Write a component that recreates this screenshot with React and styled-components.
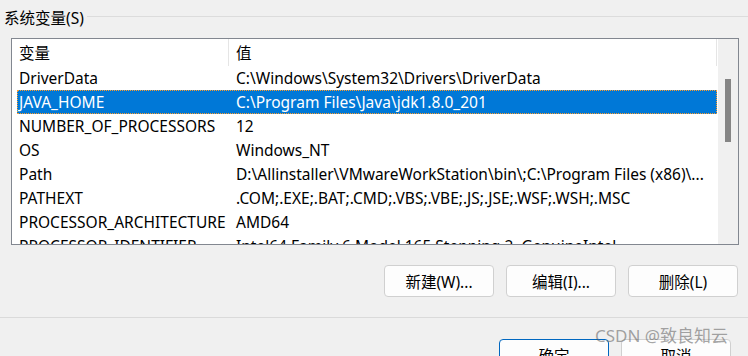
import React from 'react';
import styled, { createGlobalStyle } from 'styled-components';

const Global = createGlobalStyle`
    body {
        margin: 0;
        background: #f0f0f0;
        font-family: "Noto Sans", "Noto Sans CJK SC", sans-serif;
    }
`;

const Window = styled.div`
    position: relative;
    width: 748px;
    height: 356px;
    overflow: hidden;
    background: #f0f0f0;
    color: #000;
    font-size: 15.5px;
`;

const GroupHeader = styled.div`
    display: flex;
    align-items: center;
    height: 20px;
    padding: 7px 0 0 4px;
`;

const GroupTitle = styled.span`
    padding-right: 3px;
`;

const GroupLine = styled.div`
    flex: 1;
    height: 1px;
    background: #dcdcdc;
    margin-top: -2px;
`;

const ListBox = styled.div`
    display: flex;
    margin: 11px 0 0 11px;
    width: 726px;
    height: 205px;
    border: 1px solid #828790;
    background: #fff;
    overflow: hidden;
`;

const Table = styled.div`
    flex: 1;
    display: flex;
    flex-direction: column;
    overflow: hidden;
`;

const HeaderRow = styled.div`
    display: flex;
    height: 27px;
    align-items: center;
    flex-shrink: 0;
`;

const HeaderCell = styled.div`
    width: ${p => p.w}px;
    height: 100%;
    display: flex;
    align-items: center;
    padding-left: 7px;
    box-sizing: border-box;
    border-right: ${p => p.divider ? '1px solid #e5e5e5' : 'none'};
`;

const Row = styled.div`
    display: flex;
    align-items: center;
    height: 24px;
    flex-shrink: 0;
    margin-left: 5px;
    box-sizing: border-box;
    white-space: nowrap;
    background: ${p => p.selected ? '#0078d7' : 'transparent'};
    color: ${p => p.selected ? '#fff' : '#000'};
    outline: ${p => p.selected ? '1px dotted #ff9c2a' : 'none'};
    outline-offset: -1px;
`;

const Cell = styled.div`
    width: ${p => p.w}px;
    padding-left: 2px;
    box-sizing: border-box;
    overflow: hidden;
`;

const Scrollbar = styled.div`
    width: 20px;
    margin-left: 1px;
    background: #f0f0f0;
    display: flex;
    justify-content: center;
    padding-top: 40px;
    box-sizing: border-box;
`;

const Thumb = styled.div`
    width: 6px;
    height: 63px;
    background: #858585;
`;

const ButtonRow = styled.div`
    display: flex;
    justify-content: flex-end;
    gap: 12px;
    padding: 20px 10px 0 0;
`;

const Button = styled.button`
    width: 110px;
    height: 32px;
    border-radius: 4px;
    border: 1px solid ${p => p.primary ? '#0067c0' : '#d0d0d0'};
    background: #fdfdfd;
    font-family: inherit;
    font-size: 15.5px;
    color: #000;
    padding: 0;
`;

const Separator = styled.div`
    height: 1px;
    background: #dadada;
    margin-top: 20px;
`;

const DialogButtons = styled.div`
    display: flex;
    justify-content: flex-end;
    gap: 12px;
    padding: 21px 17px 0 0;
`;

const Watermark = styled.div`
    position: absolute;
    left: 595px;
    top: 322px;
    font-size: 17px;
    color: rgba(90, 90, 90, 0.55);
    white-space: nowrap;
`;

const vars = [
    ['DriverData', 'C:\\Windows\\System32\\Drivers\\DriverData'],
    ['JAVA_HOME', 'C:\\Program Files\\Java\\jdk1.8.0_201', true],
    ['NUMBER_OF_PROCESSORS', '12'],
    ['OS', 'Windows_NT'],
    ['Path', 'D:\\Allinstaller\\VMwareWorkStation\\bin\\;C:\\Program Files (x86)\\...'],
    ['PATHEXT', '.COM;.EXE;.BAT;.CMD;.VBS;.VBE;.JS;.JSE;.WSF;.WSH;.MSC'],
    ['PROCESSOR_ARCHITECTURE', 'AMD64'],
    ['PROCESSOR_IDENTIFIER', 'Intel64 Family 6 Model 165 Stepping 2, GenuineIntel'],
];

export default function App() {
    return (
        <Window>
            <Global />
            <GroupHeader>
                <GroupTitle>系统变量(S)</GroupTitle>
                <GroupLine />
            </GroupHeader>
            <ListBox>
                <Table>
                    <HeaderRow>
                        <HeaderCell w={217} divider>变量</HeaderCell>
                        <HeaderCell w={488} divider>值</HeaderCell>
                    </HeaderRow>
                    {vars.map(([name, value, selected]) => (
                        <Row key={name} selected={selected}>
                            <Cell w={217}>{name}</Cell>
                            <Cell w={482}>{value}</Cell>
                        </Row>
                    ))}
                </Table>
                <Scrollbar>
                    <Thumb />
                </Scrollbar>
            </ListBox>
            <ButtonRow>
                <Button>新建(W)...</Button>
                <Button>编辑(I)...</Button>
                <Button>删除(L)</Button>
            </ButtonRow>
            <Separator />
            <DialogButtons>
                <Button primary>确定</Button>
                <Button>取消</Button>
            </DialogButtons>
            <Watermark>CSDN @致良知云</Watermark>
        </Window>
    );
}
